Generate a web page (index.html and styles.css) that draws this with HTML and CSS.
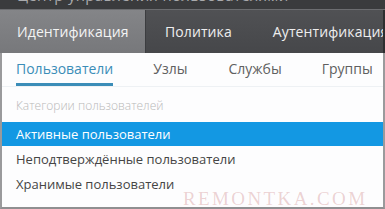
FILE: index.html
```html
<!DOCTYPE html>
<html lang="ru">
<head>
<meta charset="utf-8">
<link rel="stylesheet" href="styles.css">
</head>
<body>
<div class="screen">
  <div class="topstrip"><span class="toptext">Центр управления пользователями</span></div>
  <nav class="mainnav">
    <div class="mtab active">Идентификация</div>
    <div class="mtab">Политика</div>
    <div class="mtab">Аутентификация</div>
  </nav>
  <section class="panel">
    <div class="subnav">
      <div class="stab active">Пользователи</div>
      <div class="stab">Узлы</div>
      <div class="stab">Службы</div>
      <div class="stab">Группы</div>
    </div>
    <div class="caption">Категории пользователей</div>
    <ul class="list">
      <li class="item selected">Активные пользователи</li>
      <li class="item">Неподтверждённые пользователи</li>
      <li class="item">Хранимые пользователи</li>
    </ul>
  </section>
  <div class="watermark">REMONTKA.COM</div>
</div>
</body>
</html>
```
FILE: styles.css
```css
html, body {
  margin: 0;
  padding: 0;
}
body {
  width: 385px;
  height: 209px;
  overflow: hidden;
  background: #3a3b3d;
  font-family: "Open Sans", "Noto Sans", sans-serif;
}
.screen {
  position: relative;
  width: 385px;
  height: 209px;
  display: flex;
  flex-direction: column;
}
.topstrip {
  height: 9px;
  overflow: hidden;
  background: #3a3b3d;
  border-bottom: 1px solid #6c6d70;
  padding-left: 17px;
}
.toptext {
  display: block;
  margin-top: -15px;
  font-size: 15px;
  line-height: 20px;
  color: #a9aaad;
  letter-spacing: 0.3px;
  white-space: nowrap;
}
.mainnav {
  height: 43px;
  display: flex;
  overflow: hidden;
  background: linear-gradient(#505154, #46474a);
  border-right: 2px solid #2e2f31;
}
.mtab {
  display: flex;
  align-items: center;
  font-size: 14px;
  color: #eeeeee;
  padding: 0 20px 0 17px;
  letter-spacing: 0.1px;
  white-space: nowrap;
  flex-shrink: 0;
}
.mtab.active {
  width: 146px;
  box-sizing: border-box;
  background: linear-gradient(#848588, #77787b);
  border-right: 1px solid #3c3d40;
  color: #f4f4f4;
}
.mtab:nth-child(2) {
  padding-left: 19px;
  padding-right: 41px;
}
.mtab:nth-child(3) {
  padding-left: 0;
}
.panel {
  flex: 1;
  background: #fdfdfe;
  border-left: 2px solid #9a9a9c;
  border-right: 2px solid #9a9a9c;
  border-bottom: 2px solid #8f8f91;
  display: flex;
  flex-direction: column;
}
.subnav {
  display: flex;
  height: 33px;
  padding-left: 14px;
  border-bottom: 1px solid #eef1f4;
}
.stab {
  font-size: 14px;
  color: #606060;
  padding-top: 6px;
  box-sizing: border-box;
  height: 33px;
  white-space: nowrap;
}
.stab.active {
  color: #3b8db8;
  border-bottom: 3px solid #3b8db8;
  margin-right: 40px;
}
.stab:nth-child(2) { margin-right: 41px; }
.stab:nth-child(3) { margin-right: 40px; }
.caption {
  font-size: 12px;
  font-weight: 300;
  color: #b8b8b8;
  padding: 10px 0 0 14px;
  height: 26px;
  box-sizing: border-box;
}
.list {
  list-style: none;
  margin: 9px 0 0 0;
  padding: 0;
}
.item {
  height: 25px;
  line-height: 25px;
  font-size: 13px;
  color: #454545;
  padding-left: 14px;
}
.item.selected {
  height: 24px;
  line-height: 24px;
  background: #1398e3;
  color: #ffffff;
  margin-bottom: 1px;
}
.watermark {
  position: absolute;
  left: 183px;
  top: 189px;
  font-family: "Liberation Serif", serif;
  font-size: 19px;
  line-height: 20px;
  letter-spacing: 2.4px;
  color: rgba(200, 120, 120, 0.32);
  white-space: nowrap;
}
```
